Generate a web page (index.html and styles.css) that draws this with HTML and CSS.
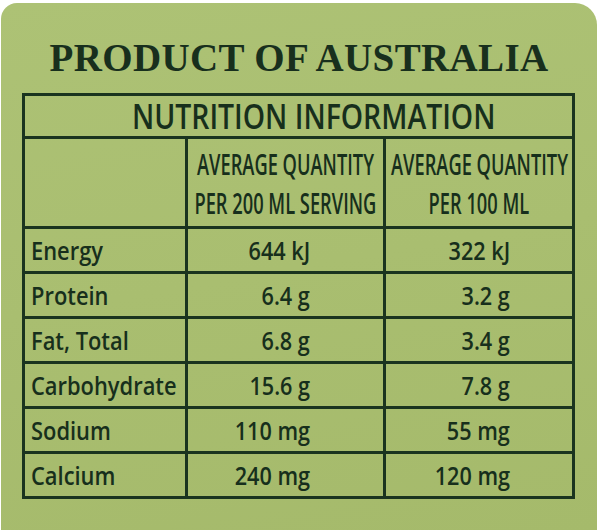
FILE: index.html
```html
<!DOCTYPE html>
<html lang="en">
<head>
<meta charset="utf-8">
<title>Nutrition Information</title>
<link rel="stylesheet" href="styles.css">
</head>
<body>
<div class="label">
  <h1 class="origin">PRODUCT OF AUSTRALIA</h1>
  <div class="panel">
    <div class="cell title"><span class="sq sq-title">NUTRITION INFORMATION</span></div>

    <div class="cell hd first"></div>
    <div class="cell hd col"><span class="sq sq-head">AVERAGE QUANTITY</span><span class="sq sq-head">PER 200 ML SERVING</span></div>
    <div class="cell hd col"><span class="sq sq-head">AVERAGE QUANTITY</span><span class="sq sq-head">PER 100 ML</span></div>

    <div class="cell name"><span class="sq sq-name">Energy</span></div>
    <div class="cell val v2"><span class="sq sq-val">644 kJ</span></div>
    <div class="cell val v3"><span class="sq sq-val">322 kJ</span></div>

    <div class="cell name"><span class="sq sq-name">Protein</span></div>
    <div class="cell val v2"><span class="sq sq-val">6.4 g</span></div>
    <div class="cell val v3"><span class="sq sq-val">3.2 g</span></div>

    <div class="cell name"><span class="sq sq-name">Fat, Total</span></div>
    <div class="cell val v2"><span class="sq sq-val">6.8 g</span></div>
    <div class="cell val v3"><span class="sq sq-val">3.4 g</span></div>

    <div class="cell name"><span class="sq sq-name">Carbohydrate</span></div>
    <div class="cell val v2"><span class="sq sq-val">15.6 g</span></div>
    <div class="cell val v3"><span class="sq sq-val">7.8 g</span></div>

    <div class="cell name"><span class="sq sq-name">Sodium</span></div>
    <div class="cell val v2"><span class="sq sq-val">110 mg</span></div>
    <div class="cell val v3"><span class="sq sq-val">55 mg</span></div>

    <div class="cell name"><span class="sq sq-name">Calcium</span></div>
    <div class="cell val v2"><span class="sq sq-val">240 mg</span></div>
    <div class="cell val v3"><span class="sq sq-val">120 mg</span></div>
  </div>
</div>
</body>
</html>
```
FILE: styles.css
```css
html, body {
  margin: 0;
  padding: 0;
  background: #ffffff;
  overflow: hidden;
}

.label {
  box-sizing: border-box;
  margin: 3px 0 0 1px;
  width: 596px;
  height: 527px;
  border-radius: 16px 22px 0 0;
  background: linear-gradient(170deg, #adc275 0%, #a9be70 50%, #a5ba6b 100%);
  padding-top: 35px;
  color: #16301c;
  overflow: hidden;
}

.origin {
  margin: 0;
  font-family: "Liberation Serif", "Times New Roman", serif;
  font-weight: bold;
  font-size: 39px;
  line-height: 39px;
  letter-spacing: 0.35px;
  text-align: center;
  color: #182f1d;
}

.panel {
  margin: 16px 0 0 21px;
  width: 553px;
  box-sizing: border-box;
  border: 3px solid #1a341f;
  display: grid;
  grid-template-columns: 160px 198px 189px;
  grid-template-rows: 40px 90px repeat(6, 45px);
  font-family: "Open Sans", "DejaVu Sans", sans-serif;
  font-weight: 600;
  color: #172f1c;
}

.cell {
  box-sizing: border-box;
  border-top: 3px solid #1a341f;
  display: flex;
  align-items: center;
  min-width: 0;
}

.cell.title {
  grid-column: 1 / -1;
  border-top: 0;
  justify-content: center;
  padding-left: 30px;
  font-size: 34px;
  line-height: 40px;
}

.cell.hd {
  flex-direction: column;
  justify-content: center;
  align-items: center;
  font-size: 29px;
  line-height: 39px;
}

.cell.col,
.cell.val {
  border-left: 3px solid #1a341f;
}

.cell.name {
  font-size: 25px;
  line-height: 42px;
  padding-left: 6px;
}

.cell.val {
  font-size: 25px;
  line-height: 42px;
  justify-content: flex-end;
}

.cell.v2 {
  padding-right: 73px;
}

.cell.v3 {
  padding-right: 62px;
}

.sq {
  display: inline-block;
  white-space: nowrap;
  transform-origin: center;
}

.sq-title {
  transform: scaleX(0.835);
}

.sq-head {
  transform: scaleX(0.63);
}

.sq-name {
  transform: scaleX(0.875);
  transform-origin: left center;
}

.sq-val {
  transform: scaleX(0.865);
  transform-origin: right center;
}
```
